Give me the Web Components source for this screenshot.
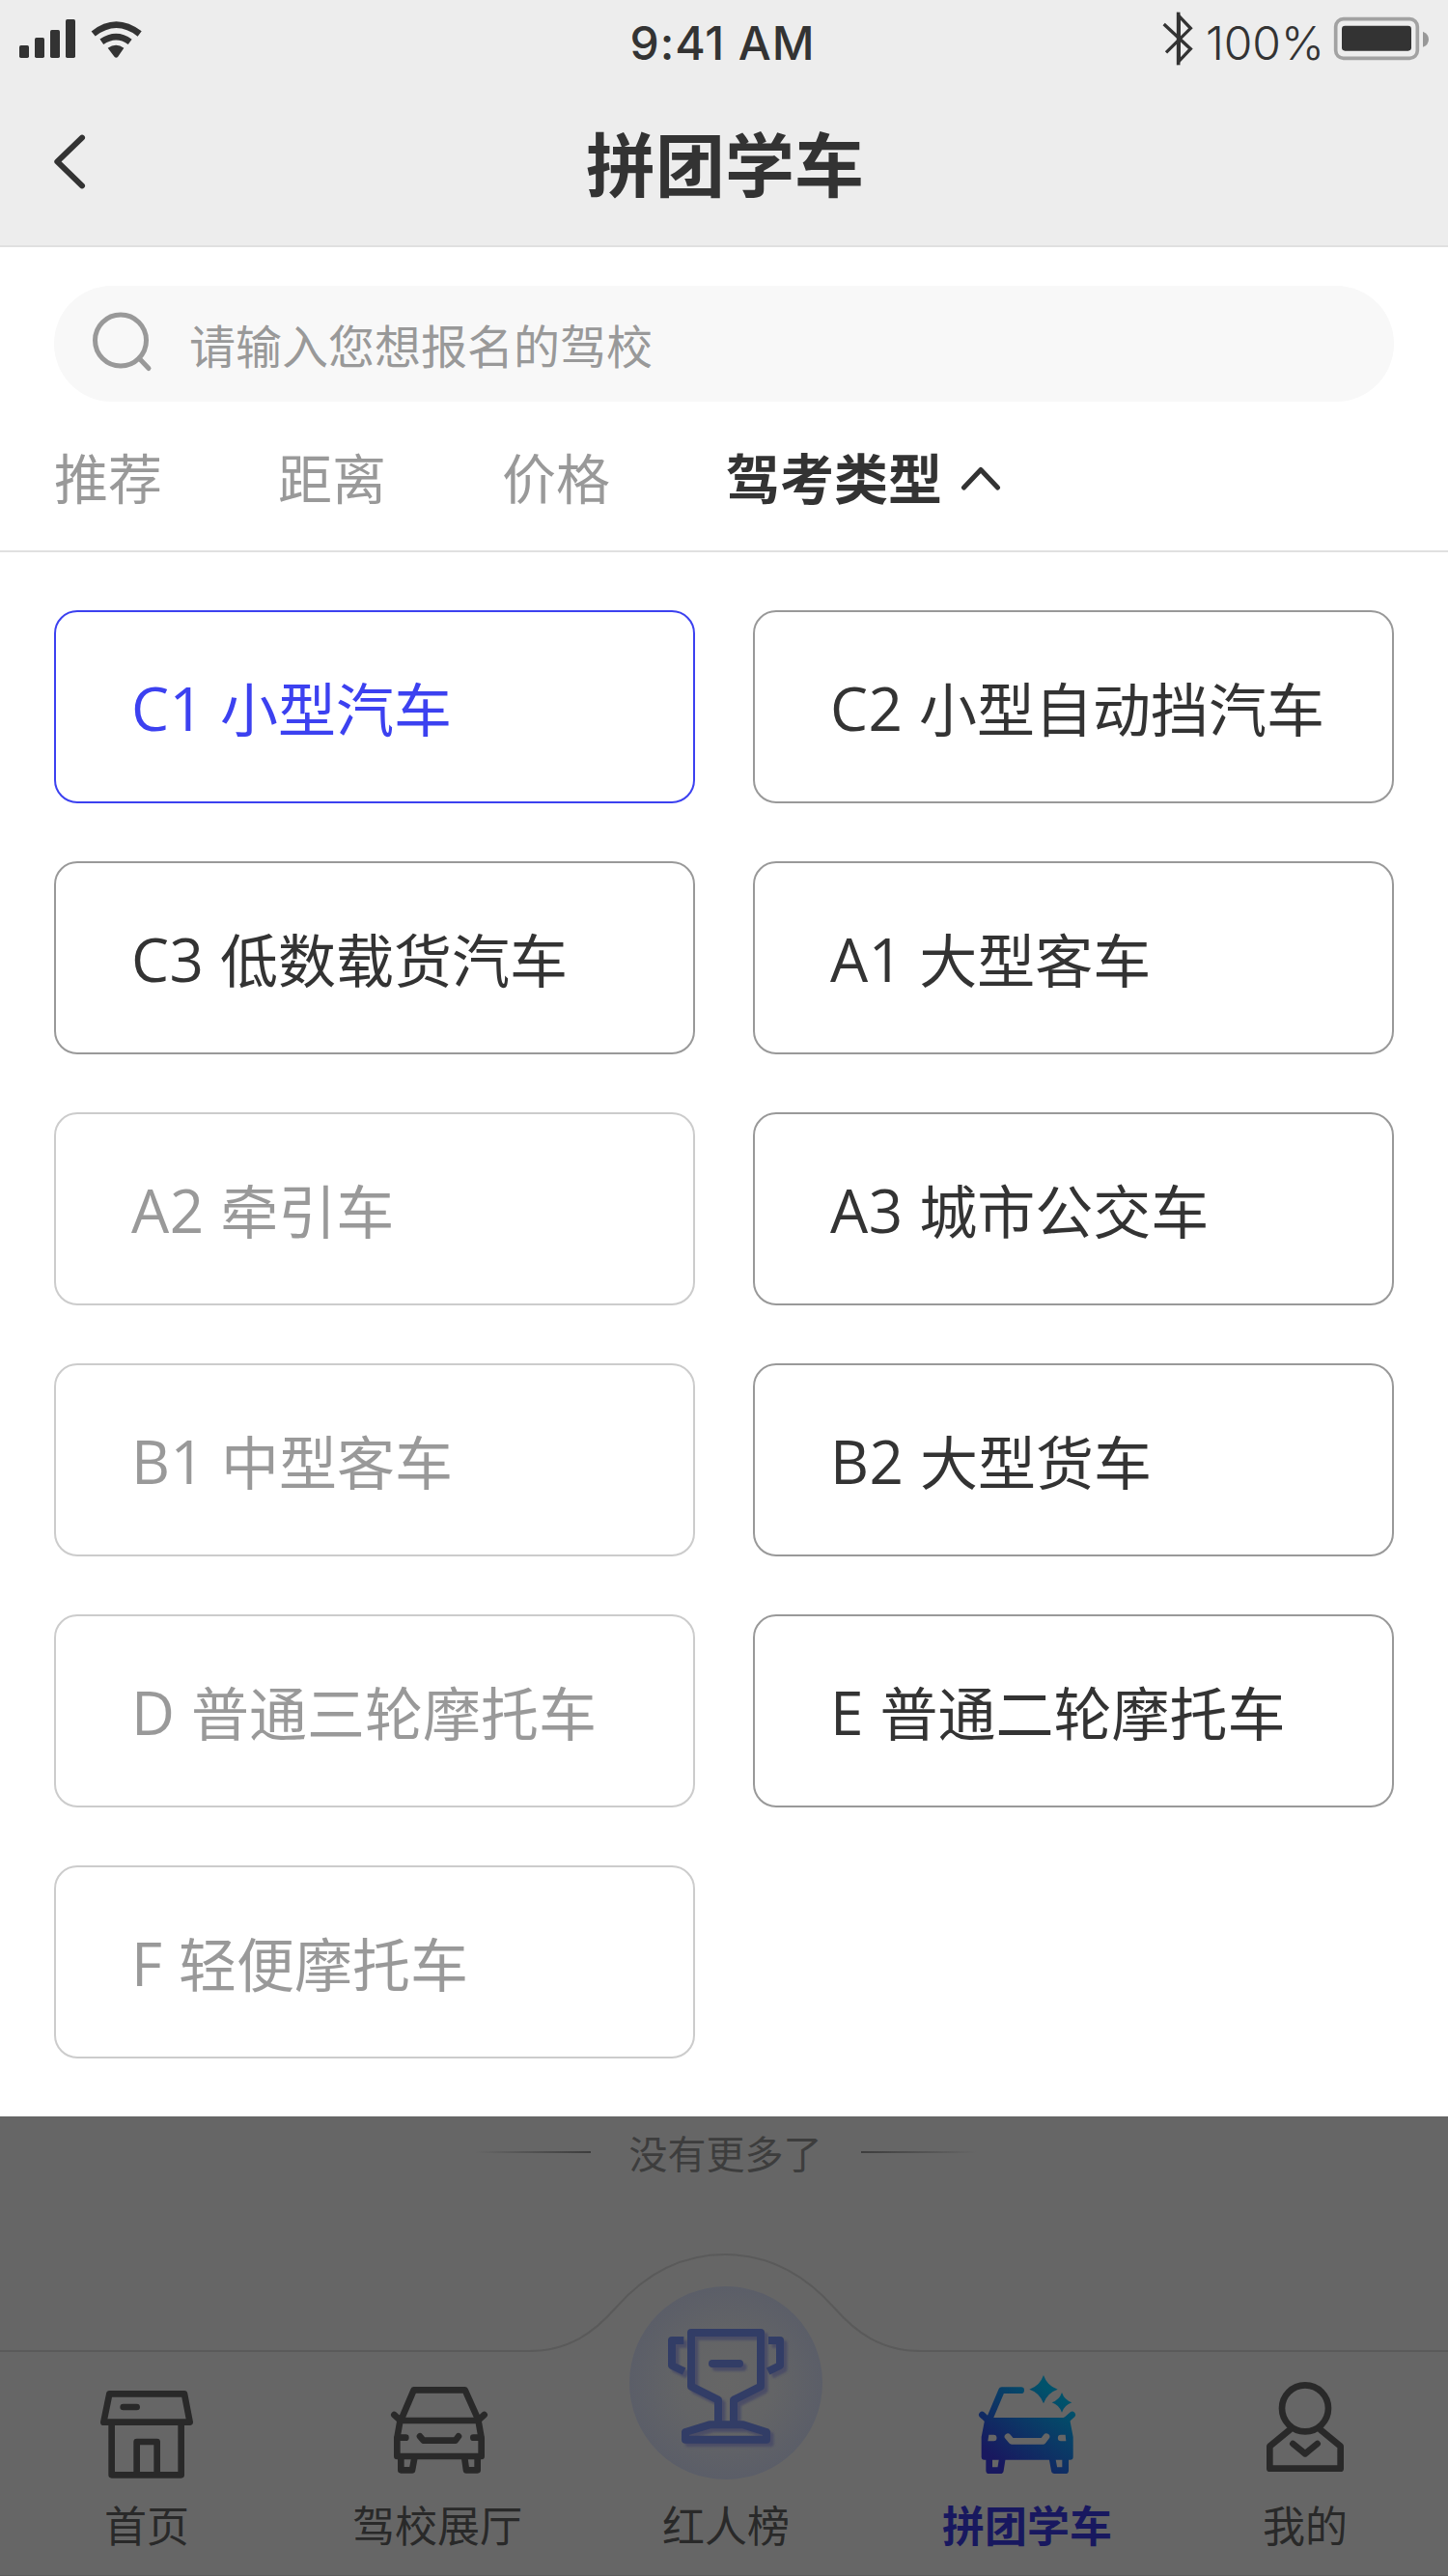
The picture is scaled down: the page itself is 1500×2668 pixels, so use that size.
<!DOCTYPE html>
<html lang="zh-CN">
<head>
<meta charset="utf-8">
<title>拼团学车</title>
<style>
  html, body { margin: 0; padding: 0; }
  body {
    width: 1500px; height: 2668px; overflow: hidden; background: #fff;
    font-family: "Noto Sans CJK SC", "Noto Sans", sans-serif; color: #333;
  }
</style>
</head>
<body>
<app-screen></app-screen>
<script>
const define = (name, html, setup) => {
  const template = document.createElement('template');
  template.innerHTML = html;
  customElements.define(name, class extends HTMLElement {
    connectedCallback() {
      if (this.shadowRoot) return;
      this.attachShadow({ mode: 'open' }).append(template.content.cloneNode(true));
      if (setup) setup(this, this.shadowRoot);
    }
  });
};

define('status-bar', `
<style>
  :host { display: grid; grid-template-columns: 1fr auto 1fr; align-items: center; height: 90px;
    font-family: Inter, sans-serif; font-size: 48px; line-height: 90px; white-space: nowrap; }
  svg { display: block; height: 90px; flex: none; }
  .time { font-weight: 500; letter-spacing: .9px; padding-right: 3px; }
  .right { display: flex; justify-content: flex-end; }
  .pct { font-weight: 350; width: 125px; letter-spacing: -.1px; }
</style>
<svg width="160" viewBox="0 0 480 270" fill="#333">
  <rect x="60" y="141" width="30" height="39" rx="5"/><rect x="108" y="117" width="30" height="63" rx="5"/>
  <rect x="156" y="93" width="30" height="87" rx="5"/><rect x="204" y="60" width="30" height="120" rx="5"/>
  <path d="M290 105Q361 49 434 105M316 130Q361 99 404 130" fill="none" stroke="#333" stroke-width="20"/>
  <path d="M335 149Q361 132 385 149L366 177Q361 182 356 177Z"/>
</svg>
<span class="time">9:41 AM</span>
<div class="right">
  <svg width="59" viewBox="0 0 177 270"><path d="M47 75L130 152L94 190V50L130 88L54 163" fill="none" stroke="#333" stroke-width="10"/><path d="M92 38V202" stroke="#333" stroke-width="11"/></svg>
  <span class="pct">100%</span>
  <svg width="126" viewBox="552 0 378 270">
    <rect x="581" y="59" width="254" height="122" rx="24" fill="none" stroke="#a2a2a2" stroke-width="11"/>
    <rect x="600" y="80" width="216" height="78" rx="10" fill="#333"/>
    <path d="M852 98Q870 105 870 122Q870 139 852 146Z" fill="#989898"/>
  </svg>
</div>`);

define('title-bar', `
<style>
  :host { display: grid; grid-template-columns: 120px 1fr 120px; align-items: start; height: 164px; }
  svg { display: block; }
  h1 { margin: 0; padding-left: 2px; text-align: center; font-size: 72px; font-weight: 700; line-height: 154px; }
</style>
<svg width="120" height="154" viewBox="0 270 360 462"><path d="M255 428L178 502L255 577" fill="none" stroke="#333" stroke-width="18" stroke-linecap="round" stroke-linejoin="round"/></svg>
<h1><slot></slot></h1><span></span>`);

define('search-box', `
<style>
  :host { display: flex; align-items: center; margin: 40px 56px 0; height: 120px; border-radius: 60px;
    background: #f8f8f8; color: #999; font-size: 48px; }
  svg { display: block; margin: 0 32px 0 36px; }
</style>
<svg width="72" height="72" viewBox="92 320 72 72" fill="none" stroke="#999" stroke-width="5"><circle cx="125" cy="352.5" r="26.5"/><path d="M144 371L154 381.500" stroke-linecap="round"/></svg>
<slot></slot>`);

define('sort-tabs', `
<style>
  :host { display: flex; align-items: center; gap: 120px; height: 154px; padding: 0 56px;
    border-bottom: 2px solid #e0e0e0; font-size: 56px; line-height: 80px; }
</style><slot></slot>`);

define('sort-tab', `
<style>
  :host { display: flex; align-items: center; color: #999; }
  :host([open]) { color: #333; font-weight: 700; }
  svg { display: none; margin-left: 18px; }
  :host([open]) svg { display: block; margin-top: 4px; }
</style>
<slot></slot>
<svg width="44" height="32" viewBox="0 0 44 32"><path d="M4.500 26L22 7.500L39.500 26" fill="none" stroke="#333" stroke-width="5" stroke-linecap="round" stroke-linejoin="round"/></svg>`);

define('license-grid', `
<style>
  :host { display: grid; grid-template-columns: 1fr 1fr; gap: 60px; padding: 60px 56px; background: #fff; }
</style><slot></slot>`);

define('license-option', `
<style>
  :host { display: block; box-sizing: border-box; height: 200px; padding-left: 78px; border: 2px solid #999;
    border-radius: 24px; font-size: 60px; line-height: 196px; color: #333; white-space: nowrap; }
  :host([disabled]) { border-color: #ccc; color: #999; }
  :host([selected]) { border-color: #3c41f0; color: #3c41f0; }
  .code { font-family: "Open Sans", "Noto Sans", sans-serif; font-size: 62px; line-height: 0; white-space: pre;
    letter-spacing: .5px; vertical-align: 1px; }
</style><span class="code"></span><slot></slot>`,
(host, root) => { root.querySelector('.code').textContent = host.getAttribute('code') + ' '; });

define('list-end', `
<style>
  :host { display: flex; align-items: center; justify-content: center; gap: 40px; height: 74px; padding-left: 3px;
    color: #3d3d3d; font-size: 40px; }
  i { width: 120px; height: 2px; background: linear-gradient(90deg, #666, #3d3d3d); }
  i:last-child { transform: scaleX(-1); }
</style><i></i><slot></slot><i></i>`);

define('tab-bar', `
<style>
  :host { display: grid; grid-template-columns: 304px 298px 300px 324px 252px; align-items: end; position: relative;
    height: 334px; box-sizing: border-box; padding-bottom: 21px; margin-top: auto; border-bottom: 1px solid #5c5c5c; }
  .edge { position: absolute; left: 0; top: 0; z-index: 0; }
</style>
<svg class="edge" width="1500" height="110" viewBox="0 2334 1500 110"><path d="M0 2435H548C590 2435 616 2415 638 2390C668 2356 706 2335 751 2335S834 2356 864 2390C886 2415 912 2435 954 2435H1500" fill="none" stroke="#5a5a5a" stroke-width="2"/></svg>
<slot></slot>`);

const line = (box, body, size = 120) =>
  `<svg width="${size}" height="${size}" viewBox="${box}" fill="none" stroke="#292929" stroke-width="20" stroke-linejoin="round" stroke-linecap="round">${body}</svg>`;
const cup = `<path d="M372 562V497L288 455V288H504V455L420 497V562M345 574H450L522 597V620H270V597Z"/><path d="M265 312H228V390L266 408M528 312H564V390L527 408" stroke-linecap="butt"/><path d="M354 384H438"/>`;
const icons = {
  home: line('96 24 360 360', `<path d="M160 118H393L410 206H142ZM167 206V370H383V206M245 370V267H308V370M203 159H245"/>`),
  car: line('996 24 360 360', `<path d="M1063 200L1103 106H1262L1304 200M1062 201H1304M1042 183L1060 200M1322 183L1304 200M1060 204L1051 255V312H1313V255L1304 204M1051 254H1078M1288 254H1313M1122 250L1133 263H1232L1242 250M1063 312V355H1098L1106 312M1301 312V355H1266L1260 312"/>`),
  trophy: `<svg width="200" height="200" viewBox="96 144 600 600" fill="none" stroke-width="24" stroke-linejoin="round" stroke-linecap="round">
    <defs><radialGradient id="halo"><stop offset="0" stop-color="#666"/><stop offset=".5" stop-color="#636466"/><stop offset="1" stop-color="#5b5e68"/></radialGradient>
    <filter id="soft"><feGaussianBlur stdDeviation="3"/></filter></defs>
    <circle cx="396" cy="444" r="300" fill="url(#halo)"/>
    <g stroke="#4b4e66" transform="translate(11 11)" filter="url(#soft)">${cup}</g><g stroke="#323d66">${cup}</g></svg>`,
  group: `<svg width="120" height="132" viewBox="132 -12 360 396" fill="none" stroke="url(#tint)" stroke-width="20" stroke-linejoin="round" stroke-linecap="round">
    <defs><linearGradient id="tint" gradientUnits="userSpaceOnUse" x1="215" y1="325" x2="385" y2="110"><stop offset="0" stop-color="#18185f"/><stop offset="1" stop-color="#00526b"/></linearGradient></defs>
    <path d="M197 192L233 107H293M172 183L190 200M452 183L435 198M194 318V356H229L235 318M431 318V356H397L390 318"/>
    <path stroke="none" fill="url(#tint)" d="M188 192H424Q434 190 444 184L446 205L455 252V314Q455 323 446 323H179Q170 323 170 314V252L180 200Z"/>
    <path stroke="none" fill="url(#tint)" d="M363 60Q374 93 407 104Q374 115 363 148Q352 115 319 104Q352 93 363 60ZM420 114Q428 137 451 145Q428 153 420 176Q412 153 389 145Q412 137 420 114Z"/>
    <path stroke="none" fill="#666" d="M193 245H208A9.500 10 0 0 1 208 265H190ZM431 245H417A9.500 10 0 0 0 417 265H433Z"/>
    <path stroke="#666" d="M252 251L264 265H361L372 251"/></svg>`,
  me: line('36 24 360 360', `<circle cx="216" cy="163" r="72"/><path d="M168 230L106 281V350H326V281L264 230M178 273L216 304L254 273"/>`)
};

define('tab-item', `
<style>
  :host { display: flex; flex-direction: column; align-items: center; gap: 14px; position: relative;
    color: #292929; font-size: 44px; line-height: 64px; }
  :host([active]) { color: #18185f; font-weight: 700; }
  svg { display: block; }
</style><div class="icon"></div><span><slot></slot></span>`,
(host, root) => { root.querySelector('.icon').innerHTML = icons[host.getAttribute('icon')]; });

define('app-screen', `
<style>
  :host { display: flex; flex-direction: column; width: 1500px; height: 2668px; }
  header { background: #ededed; border-bottom: 2px solid #e0e0e0; }
  .dim { flex: 1; display: flex; flex-direction: column; background: #666; }
</style>
<header><status-bar></status-bar><title-bar>拼团学车</title-bar></header>
<search-box>请输入您想报名的驾校</search-box>
<sort-tabs><sort-tab>推荐</sort-tab><sort-tab>距离</sort-tab><sort-tab>价格</sort-tab><sort-tab open>驾考类型</sort-tab></sort-tabs>
<license-grid>
  <license-option code="C1" selected>小型汽车</license-option>
  <license-option code="C2">小型自动挡汽车</license-option>
  <license-option code="C3">低数载货汽车</license-option>
  <license-option code="A1">大型客车</license-option>
  <license-option code="A2" disabled>牵引车</license-option>
  <license-option code="A3">城市公交车</license-option>
  <license-option code="B1" disabled>中型客车</license-option>
  <license-option code="B2">大型货车</license-option>
  <license-option code="D" disabled>普通三轮摩托车</license-option>
  <license-option code="E">普通二轮摩托车</license-option>
  <license-option code="F" disabled>轻便摩托车</license-option>
</license-grid>
<div class="dim">
  <list-end>没有更多了</list-end>
  <tab-bar>
    <tab-item icon="home">首页</tab-item>
    <tab-item icon="car">驾校展厅</tab-item>
    <tab-item icon="trophy">红人榜</tab-item>
    <tab-item icon="group" active>拼团学车</tab-item>
    <tab-item icon="me">我的</tab-item>
  </tab-bar>
</div>`);
</script>
</body>
</html>
